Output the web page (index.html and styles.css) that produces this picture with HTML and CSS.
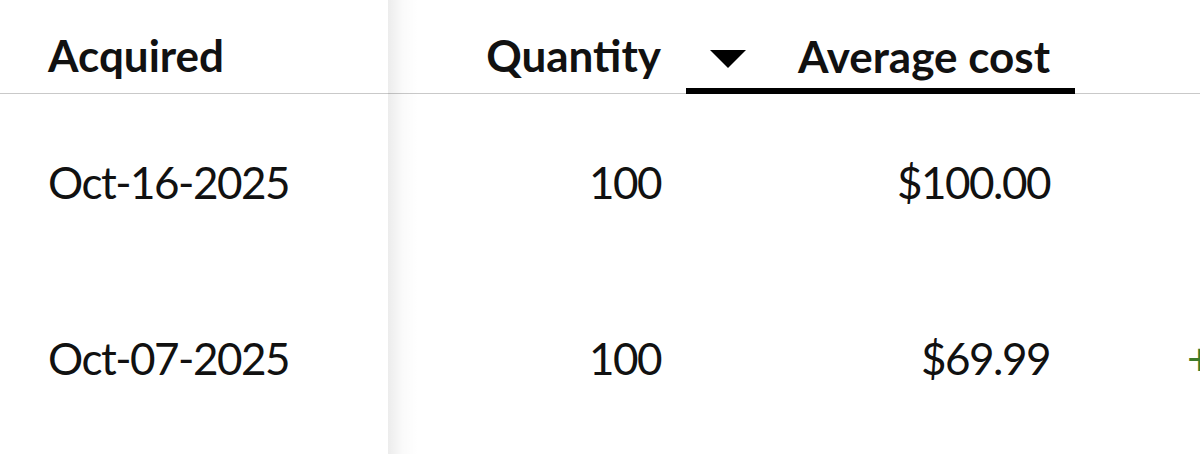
FILE: index.html
```html
<!DOCTYPE html>
<html lang="en">
<head>
<meta charset="utf-8">
<title>Lots</title>
<link rel="stylesheet" href="styles.css">
</head>
<body>
<div class="table">
  <div class="row head">
    <div class="cell first"><span>Acquired</span></div>
    <div class="cell qty"><span>Quantity</span></div>
    <div class="cell avg active">
      <svg class="arrow" width="36" height="18" viewBox="0 0 36 18"><polygon points="0,0 36,0 18,18" fill="#000"/></svg>
      <span>Average cost</span>
    </div>
    <div class="cell gain"></div>
  </div>
  <div class="row">
    <div class="cell first"><span>Oct-16-2025</span></div>
    <div class="cell qty"><span>100</span></div>
    <div class="cell avg"><span>$100.00</span></div>
    <div class="cell gain"></div>
  </div>
  <div class="row">
    <div class="cell first"><span>Oct-07-2025</span></div>
    <div class="cell qty"><span>100</span></div>
    <div class="cell avg"><span>$69.99</span></div>
    <div class="cell gain"><span class="pos">+$3,001.00</span></div>
  </div>
  <div class="shade"></div>
</div>
</body>
</html>
```

FILE: styles.css
```css
html, body {
  margin: 0;
  padding: 0;
  background: #fff;
}
body {
  width: 1200px;
  height: 454px;
  overflow: hidden;
  font-family: Lato, "Noto Sans", sans-serif;
  color: #111;
}
.table {
  position: relative;
  display: flex;
  flex-direction: column;
  width: 1200px;
  height: 454px;
}
.row {
  display: grid;
  grid-template-columns: 388px 273px 414px 125px;
  height: 176px;
  flex: none;
  font-size: 44px;
  font-weight: 400;
  letter-spacing: -1.5px;
}
.row.head {
  height: 94px;
  border-bottom: 1px solid #c9c9c9;
  box-sizing: border-box;
  font-weight: 700;
  letter-spacing: 0;
}
.cell {
  display: flex;
  align-items: center;
  white-space: nowrap;
}
.head .cell {
  align-items: flex-end;
  padding-bottom: 12px;
  box-sizing: border-box;
}
.first {
  padding-left: 48px;
  box-sizing: border-box;
  background: #fff;
}
.shade {
  position: absolute;
  top: 0;
  bottom: 0;
  left: 388px;
  width: 30px;
  background: linear-gradient(to right, rgba(0,0,0,0.075), rgba(0,0,0,0.02) 50%, rgba(0,0,0,0));
  pointer-events: none;
}
.qty {
  justify-content: flex-end;
}
.avg {
  justify-content: flex-end;
  padding-right: 25px;
  box-sizing: border-box;
  margin-left: 25px;
}
.head .avg {
  justify-content: space-between;
  padding-left: 24px;
  border-bottom: 6px solid #000;
  margin-bottom: -1px;
  padding-bottom: 6px;
}
.head .avg .arrow {
  align-self: flex-start;
  margin-top: 50px;
}
.gain {
  overflow: hidden;
  padding-left: 112px;
  box-sizing: border-box;
}
.pos {
  color: #3d7a2a;
}
```
